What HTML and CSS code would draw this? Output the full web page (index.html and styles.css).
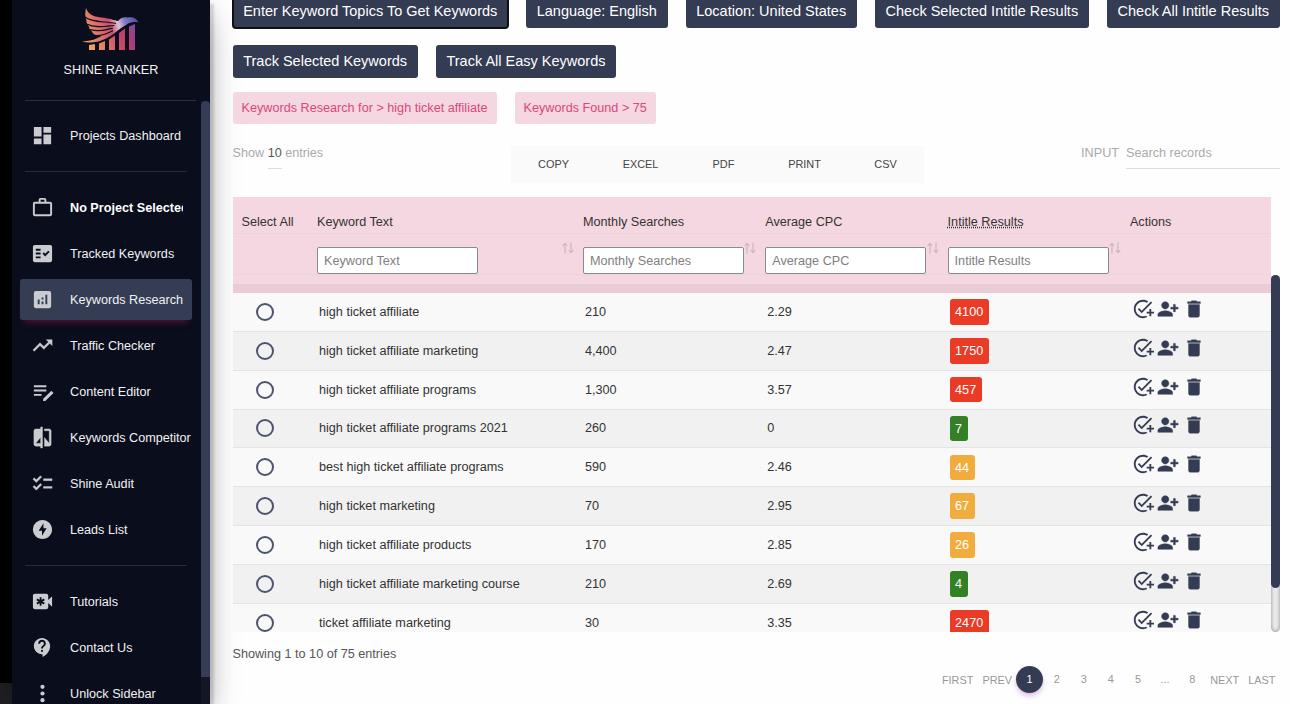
FILE: index.html
```html
<!doctype html>
<html lang="en">
<head>
<meta charset="utf-8">
<title>Shine Ranker - Keywords Research</title>
<link rel="stylesheet" href="styles.css">
</head>
<body>
<!-- icon set -->
<svg class="sprite" width="0" height="0">
	<symbol id="i-dashboard" viewBox="0 0 24 24"><path d="M3 13h8V3H3v10zm0 8h8v-6H3v6zm10 0h8V11h-8v10zm0-18v6h8V3h-8z"/></symbol>
	<symbol id="i-work" viewBox="0 0 24 24"><path d="M14 6V4h-4v2h4zM4 8v11h16V8H4zm16-2c1.11 0 2 .89 2 2v11c0 1.11-.89 2-2 2H4c-1.11 0-2-.89-2-2l.01-11c0-1.11.88-2 1.99-2h4V4c0-1.11.89-2 2-2h4c1.11 0 2 .89 2 2v2h4z" fill-rule="evenodd"/></symbol>
	<symbol id="i-fact" viewBox="0 0 24 24"><path fill-rule="evenodd" d="M20 3H4c-1.100 0-2 .9-2 2v14c0 1.100.9 2 2 2h16c1.100 0 2-.9 2-2V5c0-1.100-.9-2-2-2zM10 17H5v-2h5v2zM10 13H5v-2h5v2zM10 9H5V7h5v2zM14.820 15L12 12.160l1.410-1.410 1.410 1.420L17.990 9l1.420 1.420L14.820 15z"/></symbol>
	<symbol id="i-analytics" viewBox="0 0 24 24"><path fill-rule="evenodd" d="M19 3H5c-1.100 0-2 .9-2 2v14c0 1.100.9 2 2 2h14c1.100 0 2-.9 2-2V5c0-1.100-.9-2-2-2zM9 17H7v-5h2v5zM13 17h-2v-3h2v3zM13 12h-2v-2h2v2zM17 17h-2V7h2v10z"/></symbol>
	<symbol id="i-trend" viewBox="0 0 24 24"><path d="M16 6l2.290 2.290-4.880 4.880-4-4L2 16.590 3.410 18l6-6 4 4 6.300-6.290L22 12V6z" stroke="#cbccd0" stroke-width=".5"/></symbol>
	<symbol id="i-note" viewBox="0 0 24 24"><path d="M3 10h13v2H3v-2zm0-4.500h13v2H3v-2zm0 9h8v2H3v-2zM21.500 11.600l2 2-8.600 8.200h-2.200v-2.200l7.300-7c.5-.9 1-1.100 1.500-1z"/></symbol>
	<symbol id="i-compare" viewBox="0 0 24 24"><path fill-rule="evenodd" d="M10 3H5c-1.100 0-2 .9-2 2v14c0 1.100.9 2 2 2h5v2h2V1h-2v2zm0 15H5l5-6v6zm9-15h-5v2h5v13l-5-6v9h5c1.100 0 2-.9 2-2V5c0-1.100-.9-2-2-2z" stroke="#cbccd0" stroke-width=".4"/></symbol>
	<symbol id="i-checklist" viewBox="0 0 24 24"><path d="M22 7h-9v2h9V7zM22 15h-9v2h9v-2zM5.540 11L2 7.460l1.410-1.410 2.120 2.120 4.240-4.240 1.410 1.410L5.540 11zM5.540 19L2 15.460l1.410-1.410 2.120 2.120 4.240-4.240 1.410 1.410L5.540 19z" stroke="#cbccd0" stroke-width=".4"/></symbol>
	<symbol id="i-bolt" viewBox="0 0 24 24"><path fill-rule="evenodd" d="M12 2.020c-5.510 0-9.980 4.470-9.980 9.980s4.470 9.980 9.980 9.980 9.980-4.470 9.980-9.980S17.510 2.020 12 2.020zM11.480 18.500v-5.100H8L13 5.500v5.100h3.350L11.480 18.500z"/></symbol>
	<symbol id="i-video" viewBox="0 0 24 24"><path d="M18 10.480V6c0-1.100-.9-2-2-2H4c-1.100 0-2 .9-2 2v12c0 1.100.9 2 2 2h12c1.100 0 2-.9 2-2v-4.480l4 3.980v-11l-4 3.980z"/><path d="M10 7.500v9M6.100 9.750l7.800 4.500M6.100 14.250l7.800-4.500" stroke="#090d1c" stroke-width="1.900"/></symbol>
	<symbol id="i-support" viewBox="0 0 24 24"><path fill-rule="evenodd" d="M11.500 2C6.810 2 3 5.810 3 10.500S6.810 19 11.500 19h.5v3c4.860-2.340 8-7 8-11.500C20 5.810 16.190 2 11.500 2zm1 14.500h-2v-2h2v2zm0-3.500h-2c0-3.250 3-3 3-5 0-1.100-.9-2-2-2s-2 .9-2 2h-2c0-2.210 1.790-4 4-4s4 1.790 4 4c0 2.500-3 2.750-3 5z"/></symbol>
	<symbol id="i-more" viewBox="0 0 24 24"><circle cx="12" cy="5" r="2.200"/><circle cx="12" cy="12" r="2.200"/><circle cx="12" cy="19" r="2.200"/></symbol>
	<symbol id="i-task" viewBox="0 0 24 24"><path d="M22 5.180L10.590 16.600l-4.240-4.240 1.410-1.410 2.830 2.830 10-10L22 5.180zM12 20c-4.410 0-8-3.590-8-8s3.590-8 8-8c1.570 0 3.040.46 4.280 1.250l1.450-1.450C16.100 2.670 14.130 2 12 2 6.480 2 2 6.480 2 12s4.480 10 10 10c1.730 0 3.360-.44 4.780-1.220l-1.500-1.500C14.280 19.740 13.170 20 12 20zM19 15h-3v2h3v3h2v-3h3v-2h-3v-3h-2v3z"/></symbol>
	<symbol id="i-person" viewBox="0 0 24 24"><path d="M13 8c0-2.210-1.790-4-4-4S5 5.790 5 8s1.790 4 4 4 4-1.790 4-4zm2 2v2h3v3h2v-3h3v-2h-3V7h-2v3h-3zM1 18v2h16v-2c0-2.660-5.330-4-8-4s-8 1.340-8 4z" stroke="#343c53" stroke-width=".5"/></symbol>
	<symbol id="i-delete" viewBox="0 0 24 24"><path d="M6 19c0 1.100.9 2 2 2h8c1.100 0 2-.9 2-2V7H6v12zM19 4h-3.500l-1-1h-5l-1 1H5v2h14V4z" stroke="#343c53" stroke-width=".4"/></symbol>
	<symbol id="i-sort" viewBox="0 0 12 12"><path d="M3 11.500V1.500M.7 4L3 1.300 5.300 4M9 .5v10M6.700 8L9 10.700 11.300 8" fill="none" stroke="#cdb3be" stroke-width="1.100"/></symbol>
</svg>

<div class="wrapper">
	<div class="edge"><div class="edge-corner"></div></div>

	<nav class="sidebar">
		<div class="brand">
			<svg class="logo" viewBox="0 0 58 42">
				<defs>
					<linearGradient id="wing" gradientUnits="userSpaceOnUse" x1="0" y1="30" x2="56" y2="12">
						<stop offset="0" stop-color="#eda466"/>
						<stop offset=".32" stop-color="#dc6c68"/>
						<stop offset=".52" stop-color="#c9506f"/>
						<stop offset=".66" stop-color="#e3bfd0"/>
						<stop offset=".78" stop-color="#7d78c4"/>
						<stop offset="1" stop-color="#54489c"/>
					</linearGradient>
					<linearGradient id="bars" gradientUnits="userSpaceOnUse" x1="6" y1="38" x2="56" y2="22">
						<stop offset="0" stop-color="#eeab62"/>
						<stop offset=".3" stop-color="#e07f66"/>
						<stop offset=".62" stop-color="#cb4468"/>
						<stop offset=".8" stop-color="#b03c72"/>
						<stop offset="1" stop-color="#6950a8"/>
					</linearGradient>
				</defs>
				<path fill="url(#wing)" d="M4 0c2 6 7 8.500 15 9.500 8 .8 14 3 17 3.500C39 9.500 42 9 46 9.500c5-.8 8 .5 10.500 5C52 13.500 48 14 44 17c-8 4-15 13-26 16C12 34.800 5 35 0 33.500c9-.5 15-2.500 20-6-6 .3-9-1.200-10-4C8 22 7 20.500 7 18.500 5 17 4.500 15 4.500 13 3 9 3 4 4 0z"/>
				<path fill="none" stroke="#090d1c" stroke-width="1.200" d="M3 9c7 6 20 4 31 6.500M4.500 16c8 4 18 2.500 28 1.500M8 21.500c8 2.500 15 .5 23-1.500M13 27.500c8 .5 13-2 18-5"/>
				<g fill="url(#bars)">
					<path d="M7 37l6-1v6H7zM17 35.500l6-2.500v9h-6zM27 31.500l6-4V42h-6zM37 25l6-4.500V42h-6zM47 18.500l6-2.500v26h-6z"/>
				</g>
			</svg>
			<div class="brand-name">SHINE RANKER</div>
		</div>
		<div class="nav-scroll">
			<ul class="nav-list">
				<li class="nav-item"><svg class="icon"><use href="#i-dashboard"/></svg><span>Projects Dashboard</span></li>
			</ul>
			<ul class="nav-list">
				<li class="nav-item nav-project"><svg class="icon"><use href="#i-work"/></svg><span>No Project Selected</span></li>
				<li class="nav-item"><svg class="icon"><use href="#i-fact"/></svg><span>Tracked Keywords</span></li>
				<li class="nav-item active"><svg class="icon"><use href="#i-analytics"/></svg><span>Keywords Research</span></li>
				<li class="nav-item"><svg class="icon"><use href="#i-trend"/></svg><span>Traffic Checker</span></li>
				<li class="nav-item"><svg class="icon"><use href="#i-note"/></svg><span>Content Editor</span></li>
				<li class="nav-item"><svg class="icon"><use href="#i-compare"/></svg><span>Keywords Competitor</span></li>
				<li class="nav-item"><svg class="icon"><use href="#i-checklist"/></svg><span>Shine Audit</span></li>
				<li class="nav-item"><svg class="icon"><use href="#i-bolt"/></svg><span>Leads List</span></li>
			</ul>
			<ul class="nav-list">
				<li class="nav-item"><svg class="icon"><use href="#i-video"/></svg><span>Tutorials</span></li>
				<li class="nav-item"><svg class="icon"><use href="#i-support"/></svg><span>Contact Us</span></li>
				<li class="nav-item"><svg class="icon"><use href="#i-more"/></svg><span>Unlock Sidebar</span></li>
			</ul>
			<div class="nav-bar"><div class="nav-thumb"></div></div>
		</div>
	</nav>

	<main class="content">
		<div class="buttons">
			<button class="btn btn-focus">Enter Keyword Topics To Get Keywords</button>
			<button class="btn">Language: English</button>
			<button class="btn">Location: United States</button>
			<button class="btn">Check Selected Intitle Results</button>
			<button class="btn">Check All Intitle Results</button>
			<button class="btn">Track Selected Keywords</button>
			<button class="btn">Track All Easy Keywords</button>
		</div>

		<div class="tags">
			<span class="tag">Keywords Research for &gt; high ticket affiliate</span>
			<span class="tag">Keywords Found &gt; 75</span>
		</div>

		<div class="tools">
			<div class="length">Show <span class="length-value">10</span> entries</div>
			<div class="export">
				<span class="export-btn copy">COPY</span>
				<span class="export-btn excel">EXCEL</span>
				<span class="export-btn pdf">PDF</span>
				<span class="export-btn print">PRINT</span>
				<span class="export-btn csv">CSV</span>
			</div>
			<div class="search">INPUT <span class="search-field">Search records</span></div>
		</div>

		<div class="table-wrap">
			<div class="table">
				<div class="thead">
					<div class="row head-labels">
						<div>Select All</div>
						<div>Keyword Text</div>
						<div>Monthly Searches</div>
						<div>Average CPC</div>
						<div><span class="dotted">Intitle Results</span></div>
						<div>Actions</div>
					</div>
					<div class="row head-filters">
						<div></div>
						<div><input class="filter" type="text" placeholder="Keyword Text"><svg class="sort"><use href="#i-sort"/></svg></div>
						<div><input class="filter" type="text" placeholder="Monthly Searches"><svg class="sort"><use href="#i-sort"/></svg></div>
						<div><input class="filter" type="text" placeholder="Average CPC"><svg class="sort"><use href="#i-sort"/></svg></div>
						<div><input class="filter" type="text" placeholder="Intitle Results"><svg class="sort"><use href="#i-sort"/></svg></div>
						<div></div>
					</div>
					<div class="head-foot"></div>
				</div>
				<div class="tbody">
					<div class="row item">
						<div><i class="radio"></i></div><div>high ticket affiliate</div><div>210</div><div>2.29</div><div><b class="badge red">4100</b></div>
						<div class="actions"><svg><use href="#i-task"/></svg><svg><use href="#i-person"/></svg><svg><use href="#i-delete"/></svg></div>
					</div>
					<div class="row item">
						<div><i class="radio"></i></div><div>high ticket affiliate marketing</div><div>4,400</div><div>2.47</div><div><b class="badge red">1750</b></div>
						<div class="actions"><svg><use href="#i-task"/></svg><svg><use href="#i-person"/></svg><svg><use href="#i-delete"/></svg></div>
					</div>
					<div class="row item">
						<div><i class="radio"></i></div><div>high ticket affiliate programs</div><div>1,300</div><div>3.57</div><div><b class="badge red">457</b></div>
						<div class="actions"><svg><use href="#i-task"/></svg><svg><use href="#i-person"/></svg><svg><use href="#i-delete"/></svg></div>
					</div>
					<div class="row item">
						<div><i class="radio"></i></div><div>high ticket affiliate programs 2021</div><div>260</div><div>0</div><div><b class="badge green">7</b></div>
						<div class="actions"><svg><use href="#i-task"/></svg><svg><use href="#i-person"/></svg><svg><use href="#i-delete"/></svg></div>
					</div>
					<div class="row item">
						<div><i class="radio"></i></div><div>best high ticket affiliate programs</div><div>590</div><div>2.46</div><div><b class="badge orange">44</b></div>
						<div class="actions"><svg><use href="#i-task"/></svg><svg><use href="#i-person"/></svg><svg><use href="#i-delete"/></svg></div>
					</div>
					<div class="row item">
						<div><i class="radio"></i></div><div>high ticket marketing</div><div>70</div><div>2.95</div><div><b class="badge orange">67</b></div>
						<div class="actions"><svg><use href="#i-task"/></svg><svg><use href="#i-person"/></svg><svg><use href="#i-delete"/></svg></div>
					</div>
					<div class="row item">
						<div><i class="radio"></i></div><div>high ticket affiliate products</div><div>170</div><div>2.85</div><div><b class="badge orange">26</b></div>
						<div class="actions"><svg><use href="#i-task"/></svg><svg><use href="#i-person"/></svg><svg><use href="#i-delete"/></svg></div>
					</div>
					<div class="row item">
						<div><i class="radio"></i></div><div>high ticket affiliate marketing course</div><div>210</div><div>2.69</div><div><b class="badge green">4</b></div>
						<div class="actions"><svg><use href="#i-task"/></svg><svg><use href="#i-person"/></svg><svg><use href="#i-delete"/></svg></div>
					</div>
					<div class="row item">
						<div><i class="radio"></i></div><div>ticket affiliate marketing</div><div>30</div><div>3.35</div><div><b class="badge red">2470</b></div>
						<div class="actions"><svg><use href="#i-task"/></svg><svg><use href="#i-person"/></svg><svg><use href="#i-delete"/></svg></div>
					</div>
				</div>
			</div>
			<div class="table-bar"><div class="table-thumb"></div></div>
		</div>

		<div class="info">Showing 1 to 10 of 75 entries</div>
		<div class="pages">
			<span class="page-word">FIRST</span>
			<span class="page-word">PREV</span>
			<span class="page current">1</span>
			<span class="page">2</span>
			<span class="page">3</span>
			<span class="page">4</span>
			<span class="page">5</span>
			<span class="page">...</span>
			<span class="page">8</span>
			<span class="page-word">NEXT</span>
			<span class="page-word">LAST</span>
		</div>
	</main>
</div>
</body>
</html>
```
FILE: styles.css
```css
* {
  box-sizing: border-box;
}
body {
  margin: 0;
  background: #fefefe;
  color: #333;
  font: 12.65px/18px "Liberation Sans", Arial, sans-serif;
  overflow: hidden;
}
.sprite {
  display: block;
}
.wrapper {
  display: flex;
  width: 1290px;
  height: 704px;
  overflow: hidden;
}

/* strip left of the sidebar */
.edge {
  display: flex;
  flex: none;
  flex-direction: column;
  justify-content: flex-end;
  width: 12px;
  background: #000;
}
.edge-corner {
  height: 21px;
  background: #202124;
}

/* sidebar */
.sidebar {
  flex: none;
  width: 198px;
  background: #090d1c;
  box-shadow: 4px 4px 2px rgba(0, 0, 0, .13), 0 14px 34px -8px rgba(0, 0, 0, .4), 0 4px 22px rgba(0, 0, 0, .1);
  color: #f1f1f3;
}
.brand {
  display: flex;
  flex-direction: column;
  align-items: center;
  height: 100px;
  padding: 8px 0 0;
}
.logo {
  width: 58px;
  height: 42px;
}
.brand-name {
  margin-top: 11px;
}
.nav-scroll {
  position: relative;
  height: 604px;
  padding-right: 9px;
  overflow: hidden;
}
.nav-scroll::before {
  content: "";
  display: block;
  width: 171px;
  height: 1px;
  margin-left: 13px;
  background: #2b2e3b;
}
.nav-list {
  margin: 0;
  padding: 14px 9px 10px 8px;
  list-style: none;
}
.nav-list + .nav-list {
  position: relative;
  padding-top: 16px;
}
.nav-list + .nav-list::before {
  content: "";
  position: absolute;
  left: 13px;
  top: 0;
  width: 162px;
  height: 1px;
  background: #282b38;
}
.nav-item {
  display: flex;
  align-items: center;
  height: 41px;
  margin-bottom: 5px;
  padding-left: 11px;
  border-radius: 3px;
  white-space: nowrap;
}
.nav-item .icon {
  flex: none;
  width: 23px;
  height: 23px;
  margin-right: 16px;
  fill: #cbccd0;
}
.nav-project span {
  width: 113px;
  overflow: hidden;
  color: #fff;
  font-weight: bold;
}
.nav-item.active {
  background: #353d54;
  box-shadow: 0 6px 7px -4px rgba(150, 24, 72, .55);
}
.nav-bar {
  position: absolute;
  top: 1px;
  right: 0;
  width: 9px;
  height: 603px;
  background: #121627;
}
.nav-thumb {
  height: 576px;
  border-radius: 5px 5px 0 0;
  background: #353d56;
}

/* main area */
.content {
  width: 1048px;
  flex: none;
  margin-left: 22.5px;
}
.buttons {
  display: flex;
  flex-wrap: wrap;
  gap: 17.5px 18px;
  margin-top: -5px;
}
.btn {
  height: 32.5px;
  padding: 0 10.7px;
  border: 0;
  border-radius: 3px;
  background: #343c53;
  color: #fff;
  font: 14.5px "Liberation Sans", Arial, sans-serif;
  white-space: nowrap;
}
.btn-focus {
  outline: 2px solid #101010;
  outline-offset: -1px;
}
.tags {
  display: flex;
  gap: 18px;
  margin-top: 14.5px;
}
.tag {
  height: 32px;
  padding: 0 9px;
  border-radius: 3px;
  background: #f4d7e0;
  color: #d9487a;
  line-height: 32px;
}

.tools {
  display: grid;
  grid-template-columns: 278px 413px 1fr;
  height: 51px;
  margin-top: 22px;
  color: #aaa;
}
.length,
.search {
  line-height: 14px;
}
.length-value {
  display: inline-block;
  height: 23px;
  border-bottom: 1px solid #ddd;
  color: #555;
}
.export {
  display: flex;
  height: 37px;
  padding-left: 1px;
  background: #fafafa;
  color: #444;
  font-size: 10.9px;
  line-height: 36px;
  text-align: center;
}
.copy { width: 84px; }
.excel { width: 90px; }
.pdf { width: 76px; }
.print { width: 86px; }
.csv { width: 76px; }
.search {
  display: flex;
  justify-content: flex-end;
  width: 356px;
  gap: 7px;
}
.search-field {
  width: 153.5px;
  height: 23px;
  border-bottom: 1px solid #ddd;
}

/* results table */
.table-wrap {
  display: flex;
  height: 435px;
}
.table {
  width: 1038.5px;
  height: 435px;
  overflow: hidden;
}
.row {
  display: grid;
  grid-template-columns: 75.5px 266px 182.3px 182.3px 182.3px 1fr;
}
.thead {
  height: 96px;
  background: #f4d7e0;
}
.head-labels {
  height: 37px;
  padding-top: 16px;
  border-bottom: 1px solid #ead5dd;
}
.row > div {
  position: relative;
  padding-left: 9px;
}
.dotted {
  text-decoration: underline dotted #333;
}
.head-filters {
  height: 41px;
  padding-top: 13px;
  border-bottom: 1px solid #ead5dd;
}
.head-foot {
  height: 18px;
  border-bottom: 9px solid #eaccd7;
}
.filter {
  display: block;
  width: 161px;
  height: 27px;
  padding: 0 6px;
  border: 1.5px solid #8b8b8b;
  border-radius: 2px;
  background: #fff;
  font: 12.65px "Liberation Sans", Arial, sans-serif;
}
.filter::placeholder {
  color: #808080;
}
.sort {
  position: absolute;
  top: -5px;
  right: 0;
  width: 12px;
  height: 12px;
}
.item {
  align-items: center;
  height: 38.85px;
  background: #f9f9f9;
  border-bottom: 1px solid #e4e4e4;
}
.item:nth-child(even) {
  background: #f1f1f1;
}
.item > div {
  padding-left: 11px;
}
.radio {
  display: block;
  width: 18px;
  height: 18px;
  margin-left: 12px;
  border: 2px solid #4c556d;
  border-radius: 50%;
}
.badge {
  display: inline-block;
  height: 25.5px;
  padding: 0 5.5px;
  border-radius: 3px;
  color: #fff;
  font-weight: normal;
  line-height: 26px;
  vertical-align: middle;
}
.red { background: #ea3b26; }
.green { background: #348024; }
.orange { background: #f0ad3e; }
.item .actions {
  display: flex;
  gap: 3.5px;
  padding: 0 0 6px 11px;
}
.actions svg {
  width: 22px;
  height: 22px;
  fill: #343c53;
}
.table-bar {
  width: 9px;
  height: 357px;
  margin-top: 78px;
  border-radius: 5px;
  background: #eee;
  box-shadow: inset 0 0 4px #888;
}
.table-thumb {
  height: 313px;
  border-radius: 5px;
  background: #343c53;
}

.info {
  margin-top: 13px;
  color: #555;
}
.pages {
  display: flex;
  justify-content: flex-end;
  align-items: center;
  height: 27px;
  margin-top: 3px;
  padding-right: 5px;
  color: #999;
  font-size: 10.9px;
}
.page-word {
  margin-left: 9px;
}
.page {
  width: 27.1px;
  height: 27px;
  line-height: 27px;
  text-align: center;
}
.current {
  margin-left: 4px;
  border-radius: 50%;
  background: #343c53;
  box-shadow: 0 3px 5px rgba(156, 39, 176, .3);
  color: #fff;
}
.page + .page-word {
  margin-left: 4.5px;
}
```
